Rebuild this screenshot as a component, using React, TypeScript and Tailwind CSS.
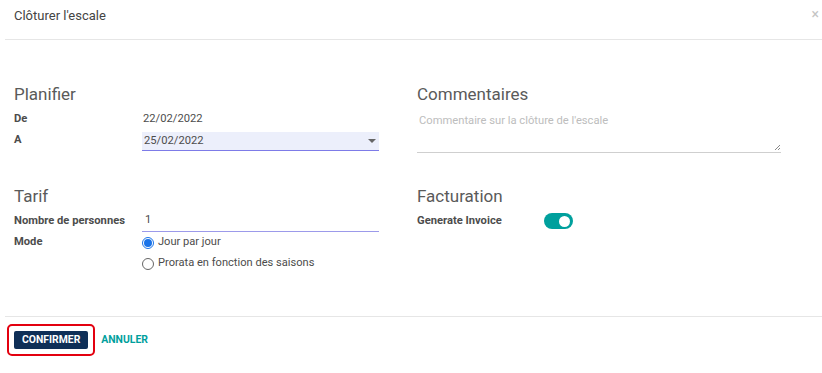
import React from 'react';

function Toggle() {
  return (
    <div className="w-[29px] h-[16px] rounded-full bg-[#00a09d] flex items-center justify-end pr-[3px]">
      <div className="w-[11px] h-[11px] rounded-full bg-white" />
    </div>
  );
}

function Radio({ checked, label }: { checked?: boolean; label: string }) {
  return (
    <label className="flex items-center gap-[4px] h-[21px] text-[11.1px] text-[#4c4c4c]">
      <span
        className={
          checked
            ? 'w-[12px] h-[12px] rounded-full border border-[#1a73e8] flex items-center justify-center'
            : 'w-[12px] h-[12px] rounded-full border border-[#666] flex items-center justify-center'
        }
      >
        {checked && <span className="w-[8px] h-[8px] rounded-full bg-[#1a73e8]" />}
      </span>
      {label}
    </label>
  );
}

export default function App() {
  return (
    <div
      className="w-[822px] h-[373px] bg-white flex flex-col text-[#4c4c4c]"
      style={{ fontFamily: 'Roboto, "Liberation Sans", sans-serif' }}
    >
      {/* Header */}
      <div className="pl-[5px]">
        <div className="h-[40px] border-b border-[#e6e6e6] flex items-start justify-between pl-[9px] pr-[3px]">
          <span className="mt-[6px] text-[13px] leading-[20px] text-[#444]">Clôturer l'escale</span>
          <span className="mt-[4px] text-[14px] leading-[20px] text-[#c4c4c4]">×</span>
        </div>
      </div>

      {/* Body */}
      <div className="flex-1 pl-[14px] pt-[42px]">
        <div className="grid grid-cols-[365px_364px] gap-x-[38px]">
          {/* Planifier */}
          <div>
            <h2 className="text-[17px] leading-[24px] text-[#5a5a5a]">Planifier</h2>
            <div className="mt-[3px] grid grid-cols-[128px_237px] text-[11.2px]">
              <div className="h-[21px] flex items-center font-bold">De</div>
              <div className="h-[21px] flex items-center pl-[1px]">22/02/2022</div>
              <div className="h-[21px] flex items-center font-bold">A</div>
              <div className="h-[21px] flex items-end">
                <div className="w-full h-[19px] bg-[#eceffb] border-b border-[#7d7be8] flex items-center justify-between pl-[2px] pr-[3px]">
                  <span>25/02/2022</span>
                  <span className="w-0 h-0 border-l-[4px] border-r-[4px] border-t-[4px] border-l-transparent border-r-transparent border-t-[#666]" />
                </div>
              </div>
            </div>
          </div>

          {/* Commentaires */}
          <div>
            <h2 className="text-[17px] leading-[24px] text-[#5a5a5a]">Commentaires</h2>
            <div className="mt-[5px] h-[42px] border-b border-[#cfcfcf] relative pl-[2px] pt-[2px] text-[11.2px] text-[#bdbdbd]">
              Commentaire sur la clôture de l'escale
              <svg className="absolute right-[0px] bottom-[1px]" width="7" height="7" viewBox="0 0 7 7">
                <path d="M6 1 L1 6 M6 4 L4 6" stroke="#888" strokeWidth="1" />
              </svg>
            </div>
          </div>

          {/* Tarif */}
          <div className="mt-[31px]">
            <h2 className="text-[17px] leading-[24px] text-[#5a5a5a]">Tarif</h2>
            <div className="mt-[2px] grid grid-cols-[128px_237px] text-[11.2px]">
              <div className="h-[22px] flex items-center font-bold">Nombre de personnes</div>
              <div className="h-[22px] flex items-center border-b border-[#9c9aea] pl-[3px]">1</div>
              <div className="h-[21px] flex items-center font-bold">Mode</div>
              <Radio checked label="Jour par jour" />
              <div />
              <Radio label="Prorata en fonction des saisons" />
            </div>
          </div>

          {/* Facturation */}
          <div className="mt-[31px]">
            <h2 className="text-[17px] leading-[24px] text-[#5a5a5a]">Facturation</h2>
            <div className="mt-[2px] grid grid-cols-[127px_236px] text-[11.2px]">
              <div className="h-[22px] flex items-center font-bold">Generate Invoice</div>
              <div className="h-[22px] flex items-center">
                <Toggle />
              </div>
            </div>
          </div>
        </div>
      </div>

      {/* Footer */}
      <div className="pl-[5px]">
        <div className="h-[57px] border-t border-[#e6e6e6] flex items-start pl-[2px] pt-[7px] gap-[6px]">
          <div className="flex rounded-[5px] border-2 border-[#e3000f] p-[5px]">
            <button className="h-[18px] px-[8px] bg-[#0f2f57] text-white text-[10.4px] font-bold leading-[18px] rounded-[2px]">
              CONFIRMER
            </button>
          </div>
          <button className="mt-[8px] text-[10.4px] font-bold leading-[16px] text-[#00a09d]">ANNULER</button>
        </div>
      </div>
    </div>
  );
}
